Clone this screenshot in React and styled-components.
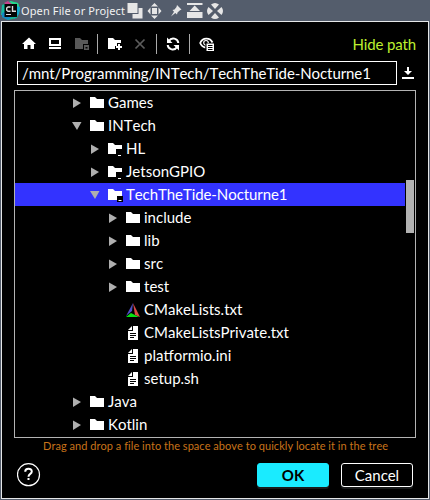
import React from 'react';
import styled, { createGlobalStyle } from 'styled-components';

const Global = createGlobalStyle`
  * { box-sizing: border-box; }
  html, body { margin: 0; padding: 0; background: #545d6c; overflow: hidden; }
`;

const Frame = styled.div`
  width: 430px;
  height: 500px;
  display: flex;
  flex-direction: column;
  background: #545d6c;
  color: #fff;
  font-family: Lato, sans-serif;
  font-size: 15px;
  font-kerning: none;
`;

const TitleBar = styled.header`
  height: 21px;
  flex: none;
  display: flex;
  align-items: flex-start;
  padding-left: 1px;
`;

const Title = styled.div`
  width: 106px;
  font: 11px/22px 'Noto Sans', sans-serif;
  letter-spacing: 0.12px;
  white-space: nowrap;
  color: #f2f2f2;
`;

const Svg = styled.svg`
  display: block;
  flex: none;
`;

const Dialog = styled.main`
  flex: none;
  width: 428px;
  height: 478px;
  margin-left: 1px;
  border: 1px solid #e4e6e8;
  background: #000;
  display: flex;
  flex-direction: column;
`;

const Toolbar = styled.div`
  height: 39px;
  flex: none;
  display: flex;
  align-items: center;
  padding: 5px 12px 0 19px;
`;

const Tool = styled.div`
  width: 16px;
  height: 16px;
  margin-right: ${(p) => p.$gap}px;
`;

const Separator = styled.div`
  width: 1px;
  height: 20px;
  background: #aaa;
  margin-right: ${(p) => p.$gap}px;
`;

const HidePath = styled.div`
  margin-left: auto;
  color: #bdf02f;
  line-height: 20px;
  letter-spacing: -0.14px;
  white-space: nowrap;
`;

const PathRow = styled.div`
  height: 24px;
  flex: none;
  display: flex;
  align-items: center;
  padding-left: 15px;
`;

const PathField = styled.div`
  width: 380px;
  height: 24px;
  border: 1px solid #fff;
  padding-left: 4px;
  line-height: 22px;
  letter-spacing: -0.08px;
  white-space: nowrap;
  margin-right: 5px;
`;

const Tree = styled.div`
  position: relative;
  width: 402px;
  height: 348px;
  flex: none;
  margin: 5px 0 0 12px;
  border: 1px solid #b3b3b3;
`;

const Row = styled.div`
  height: 23px;
  width: ${(p) => (p.$selected ? '390px' : '100%')};
  display: flex;
  align-items: center;
  padding-left: ${(p) => 57 + p.$depth * 18}px;
  background: ${(p) => (p.$selected ? '#3333ff' : 'transparent')};
  letter-spacing: ${(p) => (p.$selected ? '-0.08px' : 'normal')};
  white-space: nowrap;
`;

const Arrow = styled.div`
  width: 18px;
  height: 16px;
`;

const Label = styled.span`
  margin-left: 4px;
  line-height: 23px;
`;

const ScrollThumb = styled.div`
  position: absolute;
  right: 1px;
  top: 89px;
  width: 8px;
  height: 53px;
  background: #b2b2b2;
`;

const Hint = styled.div`
  flex: none;
  height: 16px;
  padding-left: 41px;
  font-size: 11px;
  line-height: 15px;
  letter-spacing: 0.035px;
  color: #c8731a;
  white-space: nowrap;
`;

const Footer = styled.footer`
  flex: none;
  display: flex;
  align-items: center;
  padding: 9px 15px 0 15px;
`;

const Help = styled.div`
  width: 24px;
  height: 24px;
  margin-right: auto;
`;

const Button = styled.button`
  width: 72px;
  height: 24px;
  margin-left: 12px;
  padding: 0;
  border: 1px solid ${(p) => (p.$primary ? '#1aebff' : '#fff')};
  border-radius: 3px;
  background: ${(p) => (p.$primary ? '#1aebff' : '#000')};
  color: ${(p) => (p.$primary ? '#000' : '#fff')};
  font: ${(p) => (p.$primary ? 700 : 400)} 15px/22px Lato, sans-serif;
  box-shadow: 0 2px 0 #191b1c;
`;

const FOLDER = 'M0 0h5l2 2h7v9H0z';

const PlainFolder = () => (
  <Svg width="14" height="16"><path transform="translate(0 2)" d={FOLDER} fill="#fff" /></Svg>
);

const ModuleFolder = () => (
  <Svg width="14" height="16">
    <path transform="translate(0 2)" d={FOLDER} fill="#fff" />
    <path d="M8 8h6v6H8z" fill="#000" />
    <path d="M10 14h3v1h-3z" fill="#fff" />
  </Svg>
);

const SelectedFolder = () => (
  <Svg width="14" height="16" overflow="visible">
    <path transform="translate(0 2)" d={FOLDER} fill="#fff" />
    <path d="M9 9h6v6H9z" fill="#000" />
    <path d="M10.500 13h3v1h-3z" fill="#fff" />
  </Svg>
);

const FileIcon = () => (
  <Svg width="14" height="16">
    <path d="M7 1h5v14H2V6h5z" fill="#fff" />
    <path d="M6 1v4H2z" fill="#fff" />
    <path d="M4 8h6v1H4zM4 10h6v1H4zM4 12h4v1H4z" fill="#000" />
  </Svg>
);

const CMakeIcon = () => (
  <Svg width="14" height="16">
    <path d="M7 1L0 14l6-5z" fill="#504fc4" />
    <path d="M7 1l7 14-5-2z" fill="#d84a48" />
    <path d="M0 15l5-4 8 4z" fill="#09e012" />
  </Svg>
);

const ICONS = { folder: PlainFolder, module: ModuleFolder, selected: SelectedFolder, file: FileIcon, cmake: CMakeIcon };

const ROWS = [
  ['Games', 0, 'folder', 'right'],
  ['INTech', 0, 'folder', 'down'],
  ['HL', 1, 'module', 'right'],
  ['JetsonGPIO', 1, 'module', 'right'],
  ['TechTheTide-Nocturne1', 1, 'selected', 'down'],
  ['include', 2, 'folder', 'right'],
  ['lib', 2, 'folder', 'right'],
  ['src', 2, 'folder', 'right'],
  ['test', 2, 'folder', 'right'],
  ['CMakeLists.txt', 2, 'cmake'],
  ['CMakeListsPrivate.txt', 2, 'file'],
  ['platformio.ini', 2, 'file'],
  ['setup.sh', 2, 'file'],
  ['Java', 0, 'folder', 'right'],
  ['Kotlin', 0, 'folder', 'right'],
];

function TreeRow({ row }) {
  const [name, depth, kind, arrow] = row;
  const Icon = ICONS[kind];
  return (
    <Row $depth={depth} $selected={kind === 'selected'}>
      <Arrow>
        {arrow && (
          <Svg width="12" height="16">
            <path d={arrow === 'right' ? 'M1 3.500l8 4.500-8 5z' : 'M0 4h9.500L5 12z'} fill="#afafaf" />
          </Svg>
        )}
      </Arrow>
      <Icon />
      <Label>{name}</Label>
    </Row>
  );
}

function WindowIcons() {
  return (
    <Svg width="100" height="21" fill="#e6e6e6">
      <path d="M0.500 3h10v10h-10z" />
      <path d="M11.500 8h4v10.500h-10V14h6z" />
      <path d="M25 8h5v6h-5zM27.500 3l3.500 3.500h-7zM27.500 19l3.500-3.500h-7zM20.500 11l3-3.500v7zM34.500 11l-3-3.500v7z" />
      <path d="M50 5l4.500 4.500-1.500.7-2.500 2.300-.5 2-1.700-1.500-4.300 3.500 3-4.700-1.500-1.700 2-.6 2-2.500z" />
      <path d="M60 3h15.500v2H60zM67.700 5.500l5.300 5.500H62.500zM60 12h15.500v6H60z" />
      <path d="M84 4.500q4-3 8 0l-4 4.500zM84 17.500q4 3 8 0L88 13zM81.500 7q-3 4 0 8l4.500-4zM94.500 7q3 4 0 8L90 11z" />
    </Svg>
  );
}

export default function App() {
  return (
    <>
      <Global />
      <Frame>
        <TitleBar>
          <Svg width="20" height="21">
            <path d="M1 5l8-4 8 2 2 7-3 8-9 2-6-3z" fill="#15b986" />
            <path d="M9 1l8 2 2 6-3 2-6-7z" fill="#26d88b" />
            <path d="M3 3l4-2 4 3-5 1z" fill="#c8418f" />
            <path d="M1 5l3 0v10l-4 0z" fill="#15b9a0" />
            <path d="M1 13l3-1v4l7 1-4 3-6-3z" fill="#1688c5" />
            <path d="M15 6l4 1-1 7-5 5z" fill="#14a8d0" />
            <path d="M3.500 4H16v13H3.500z" fill="#050505" />
            <path d="M9.500 7H7L5.700 8v2.200L7 11.300h2.500M11.500 6v5.300H15" fill="none" stroke="#ddd" strokeWidth="1.400" />
            <path d="M5 14h5v1H5z" fill="#ddd" />
          </Svg>
          <Title>Open File or Project</Title>
          <WindowIcons />
        </TitleBar>
        <Dialog>
          <Toolbar>
            <Tool $gap={11}>
              <Svg width="16" height="16" fill="#fff">
                <path d="M8 1.500l7 6.500h-2v5H9.500V9h-3v4H3V8H1z" />
              </Svg>
            </Tool>
            <Tool $gap={11}>
              <Svg width="16" height="16" fill="none" stroke="#fff">
                <path d="M2 3h10v6H2z" strokeWidth="2" />
                <path d="M1 12h12" strokeWidth="2" />
              </Svg>
            </Tool>
            <Tool $gap={6}>
              <Svg width="16" height="16">
                <path d="M0 2h5l2 2h6v4H8v5H0z" fill="#585858" />
                <path d="M9 9h5v5H9zM10.500 11v1.500h2V11z" fill="#585858" fillRule="evenodd" />
              </Svg>
            </Tool>
            <Separator $gap={9} />
            <Tool $gap={9}>
              <Svg width="16" height="16" fill="#fff">
                <path d="M1 2h5l2 2h6v3h-4v3H8v3H1z" />
                <path d="M11 8h2v2h2v2h-2v2h-2v-2H9v-2h2z" />
              </Svg>
            </Tool>
            <Tool $gap={8}>
              <Svg width="16" height="16">
                <path d="M3.500 3.500l9 9M12.500 3.500l-9 9" stroke="#5c5c5c" strokeWidth="1.700" />
              </Svg>
            </Tool>
            <Separator $gap={8} />
            <Tool $gap={8}>
              <Svg width="16" height="16">
                <path d="M4 5a5 5 0 0 1 9.300 2M12 11a5 5 0 0 1-9.300-2" stroke="#fff" strokeWidth="2" fill="none" />
                <path d="M2 1.500V7h5.500zM14 14.500V9H8.500z" fill="#fff" />
              </Svg>
            </Tool>
            <Separator $gap={8} />
            <Tool $gap={0}>
              <Svg width="16" height="16">
                <path d="M14.500 6.500C12 1.200 4.500 1.200 2.200 7 3.200 9.500 5 11.200 7.500 11.500" stroke="#fff" strokeWidth="1.800" fill="none" />
                <circle cx="8" cy="6.800" r="2.300" stroke="#fff" strokeWidth="1.200" fill="#000" />
                <path d="M7.500 7H16v9H7.500z" fill="#000" />
                <path d="M8.500 7.500H16V15H8.500z" fill="#fff" />
                <path d="M10 9h4.500v1H10zM10 11h4.500v1H10zM10 13h4.500v1H10z" fill="#000" />
              </Svg>
            </Tool>
            <HidePath>Hide path</HidePath>
          </Toolbar>
          <PathRow>
            <PathField>/mnt/Programming/INTech/TechTheTide-Nocturne1</PathField>
            <Svg width="12" height="16" fill="#fff">
              <path d="M5 2h2v4h3l-4 4-4-4h3zM0 12h12v2H0z" />
            </Svg>
          </PathRow>
          <Tree>
            {ROWS.map((row) => <TreeRow key={row[0]} row={row} />)}
            <ScrollThumb />
          </Tree>
          <Hint>Drag and drop a file into the space above to quickly locate it in the tree</Hint>
          <Footer>
            <Help>
              <Svg width="24" height="24" fill="none" stroke="#fff">
                <circle cx="11.500" cy="11.700" r="11" strokeWidth="1.200" />
                <path d="M8.200 8.800c0-4 6.600-4 6.600-.3 0 2.500-3.300 2.200-3.300 5.200M11.500 15v2" strokeWidth="2" />
              </Svg>
            </Help>
            <Button $primary>OK</Button>
            <Button>Cancel</Button>
          </Footer>
        </Dialog>
      </Frame>
    </>
  );
}
